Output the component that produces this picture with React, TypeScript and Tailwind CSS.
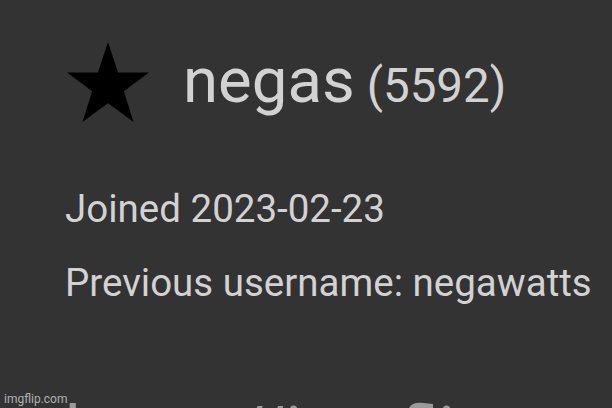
export default function App() {
  return (
    <div className="relative h-[408px] w-[612px] overflow-hidden bg-[#333333] font-['Roboto',sans-serif] text-[#d2d2d2]">
      <div className="flex flex-col pl-[65px] pt-[40px]">
        <div className="flex items-center gap-[34px]">
          <svg
            width="82"
            height="80"
            viewBox="0.9 1.2 22.2 20.8"
            preserveAspectRatio="none"
            className="mt-[2px] shrink-0 ml-[2px]"
          >
            <path
              d="M12 1.2l2.7 7.9h8.4l-6.8 4.9 2.6 8-6.9-4.9-6.9 4.9 2.6-8L.9 9.1h8.4z"
              fill="#000"
            />
          </svg>
          <div className="flex items-baseline gap-[12px] whitespace-nowrap leading-none">
            <span className="text-[63.5px]">negas</span>
            <span className="text-[47.5px]">(5592)</span>
          </div>
        </div>
        <div className="mt-[68px] whitespace-nowrap text-[38.5px] leading-none">Joined 2023-02-23</div>
        <div className="mt-[35px] whitespace-nowrap text-[38.5px] leading-none">
          Previous username: negawatts
        </div>
        <div className="mt-[96px] whitespace-nowrap text-[68px] leading-none text-[#9a9a9a]">
          https://imgflip.com/user/negas
        </div>
      </div>
      <div className="absolute bottom-[3px] left-[4px] text-[12px] leading-none text-[#cfcfcf] opacity-80">
        imgflip.com
      </div>
    </div>
  )
}
